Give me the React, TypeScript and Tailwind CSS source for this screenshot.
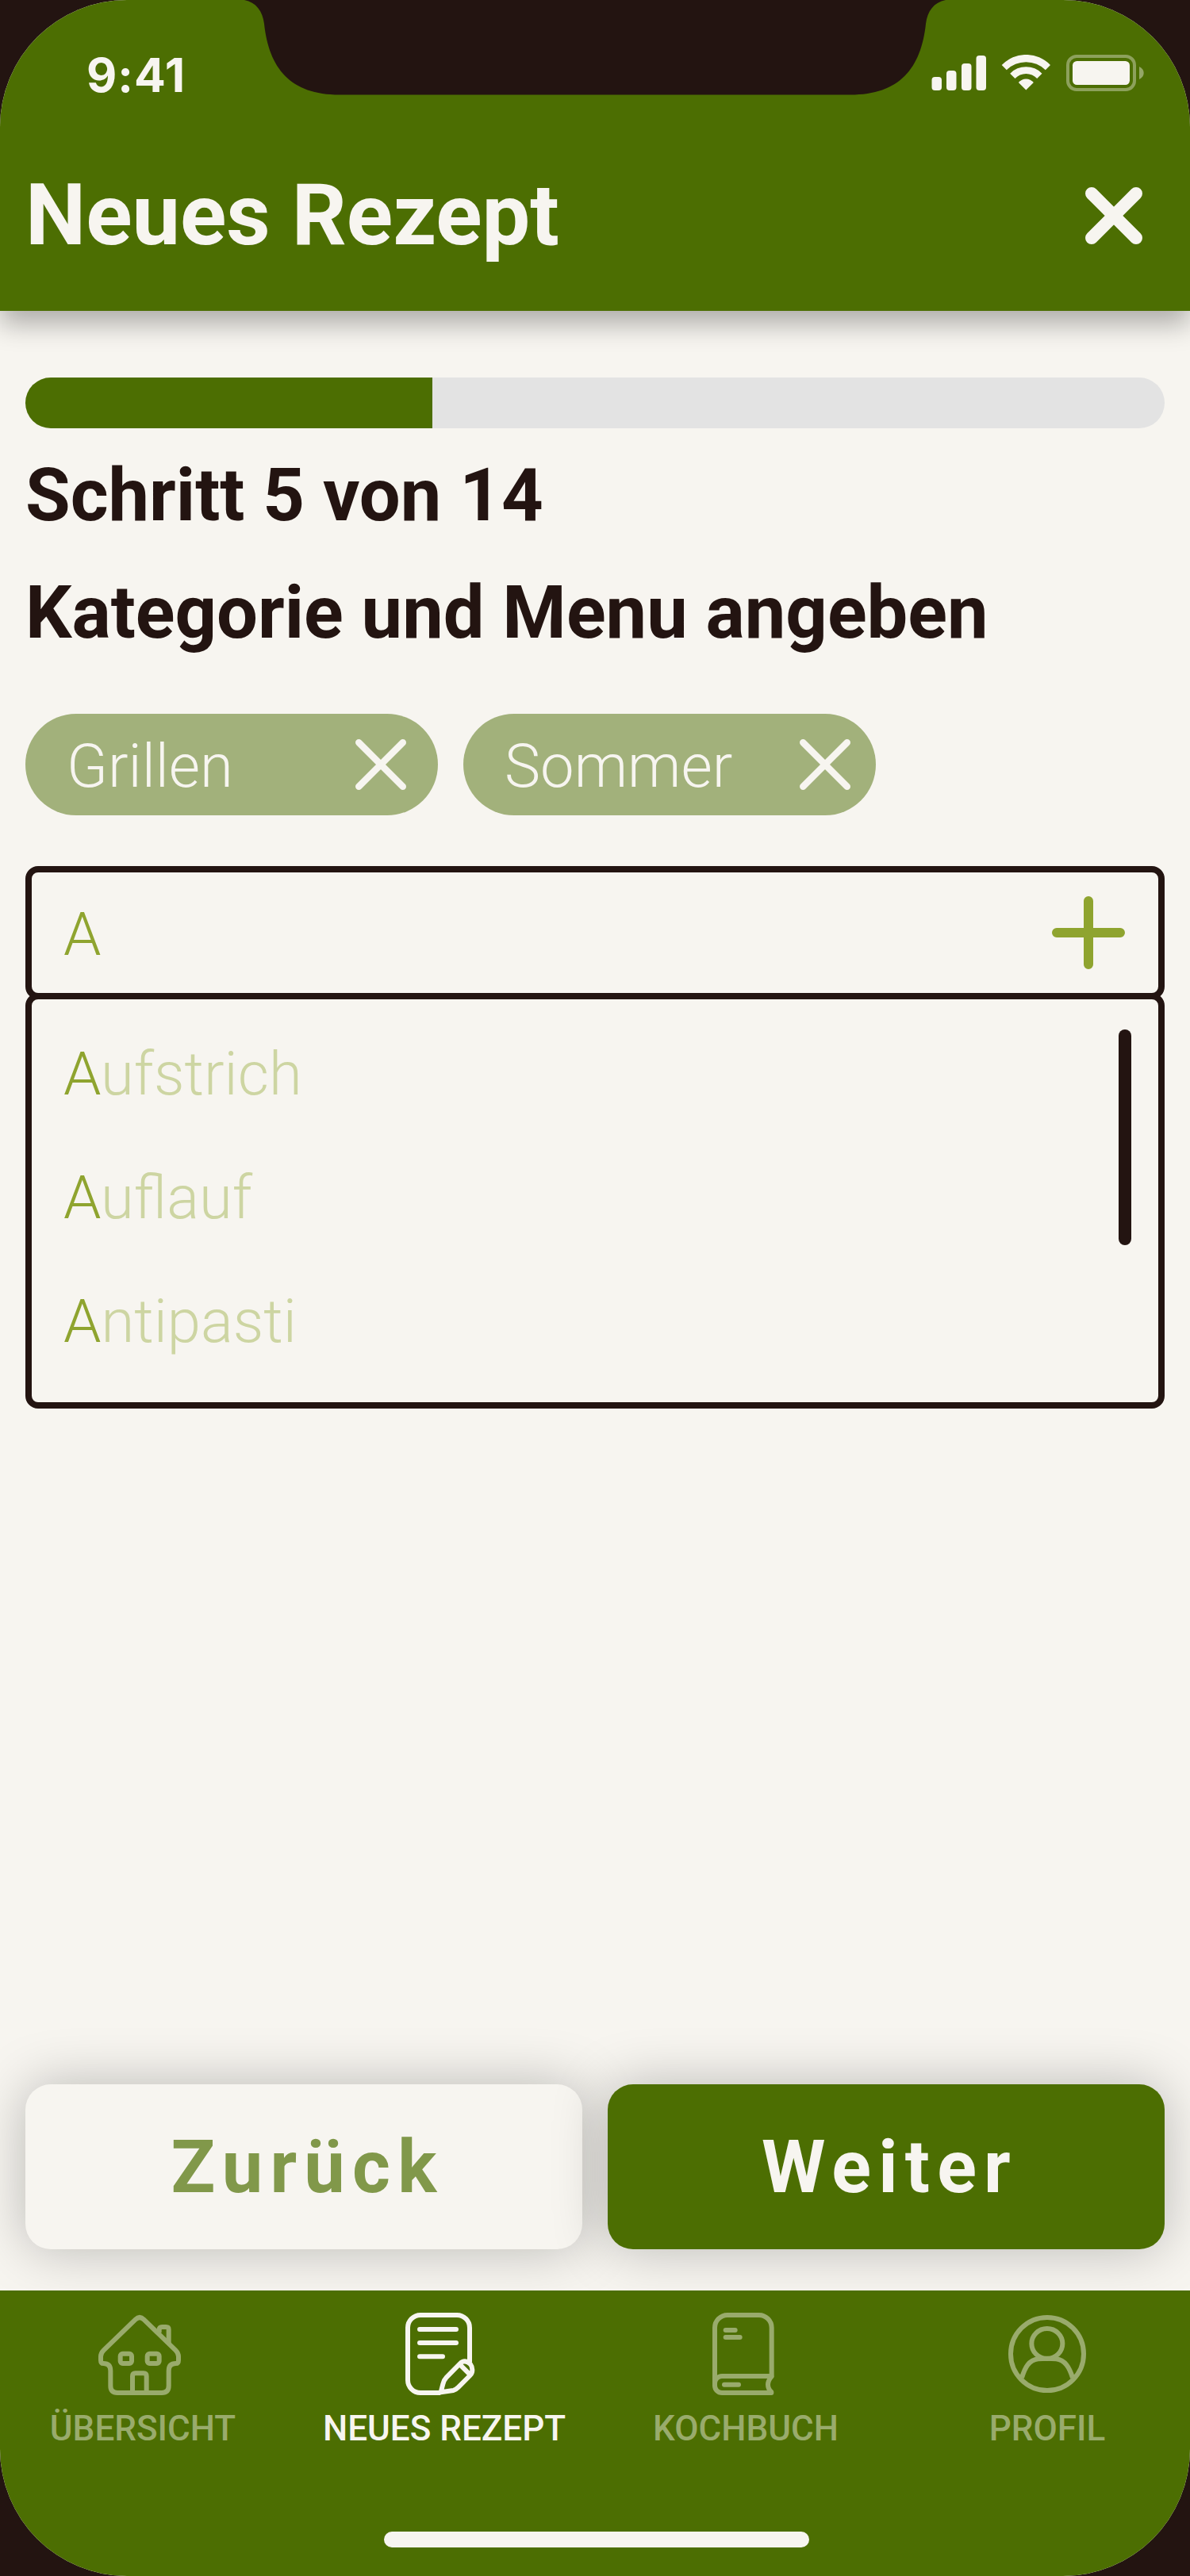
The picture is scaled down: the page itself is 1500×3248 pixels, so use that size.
import React from "react";

function Notch() {
  return (
    <svg className="absolute left-[300px] top-0" width="900" height="120" viewBox="300 0 900 120">
      <path
        d="M308 0C323 3 331 14 333 30C339 86 366 119.5 428 119.5H1072C1134 119.5 1161 86 1167 30C1169 14 1177 3 1192 0Z"
        fill="#231411"
      />
    </svg>
  );
}

function StatusIcons() {
  return (
    <svg width="268" height="46" viewBox="1174 69 268 46" fill="#f7f5f0">
      <rect x="1174.500" y="97" width="12.500" height="17" rx="4" />
      <rect x="1193" y="89" width="12.500" height="25" rx="4" />
      <rect x="1212" y="80" width="12.500" height="34" rx="4" />
      <rect x="1230.500" y="70" width="12.500" height="44" rx="4" />
      <path d="M1262.700 82A42.500 42.500 0 0 1 1324 82L1317.800 88.300A34.500 34.500 0 0 0 1268.900 88.300Z" />
      <path d="M1273.200 92.700A28 28 0 0 1 1313.500 92.700L1307.200 99A19 19 0 0 0 1279.500 99Z" />
      <path d="M1283.800 104A12.600 12.600 0 0 1 1302.900 104L1293.300 113.500Z" />
      <rect x="1346" y="71" width="84" height="42" rx="11" fill="none" stroke="#f7f5f0" strokeWidth="4" opacity=".38" />
      <rect x="1352" y="77" width="72" height="30" rx="5.500" />
      <path d="M1436 84C1439.500 85.500 1441.700 88.500 1441.700 92C1441.700 95.500 1439.500 98.500 1436 100Z" opacity=".42" />
    </svg>
  );
}

function Cross({ size, stroke }: { size: number; stroke: number }) {
  const a = stroke / 2;
  const b = size - a;
  return (
    <svg width={size} height={size} viewBox={`0 0 ${size} ${size}`} stroke="#f7f5f0" strokeWidth={stroke} strokeLinecap="round">
      <path d={`M${a} ${a}L${b} ${b}M${b} ${a}L${a} ${b}`} />
    </svg>
  );
}

function Chip({ label, className }: { label: string; className: string }) {
  return (
    <div className={`flex h-[128px] w-[520px] items-center justify-between rounded-full bg-[#a2b17b] pl-[52px] ${className}`}>
      <span className="mt-[4px] text-[76px] leading-none font-light text-[#f7f5f0]">{label}</span>
      <Cross size={64} stroke={8.500} />
    </div>
  );
}

const icons = {
  house: (
    <>
      <path d="M272 134Q288 118 304 134L424 250Q435 261 435 274V287Q435 300 425 300Q398 300 398 328V385Q398 411 372 411H204Q178 411 178 385V328Q178 300 151 300Q141 300 141 287V274Q141 261 152 250Z" />
      <path d="M362 184V173Q362 162 373 162H388Q398 162 398 172V222" />
      <rect x="215" y="263" width="43" height="37" rx="9" />
      <rect x="317" y="263" width="45" height="37" rx="9" />
      <path d="M261 408V348Q261 337 272 337H303Q314 337 314 348V408" />
    </>
  ),
  note: (
    <>
      <path d="M526 411H450A48 48 0 0 1 402 363V165A48 48 0 0 1 450 117H588A48 48 0 0 1 636 165V296" />
      <path strokeLinecap="round" d="M447 171H585M447 222H585M447 274H534" />
      <path d="M527 409L535 378Q539 362 548 353L600 300Q608 292 617 292Q631 294 639 303Q646 312 646 324Q646 337 638 345L592 391Q584 400 574 402Z" />
      <path d="M599 304L635 340" />
    </>
  ),
  book: (
    <>
      <path d="M363 384V165A48 48 0 0 1 411 117H530A48 48 0 0 1 578 165V348H390A27 27 0 0 0 363 375V384A27 27 0 0 0 390 411H578" />
      <path strokeLinecap="round" d="M577 350Q564 366 564 380Q564 396 577 408V411" />
      <path strokeLinecap="round" d="M404 174H440M404 201H458M399 380H453" />
    </>
  ),
  person: (
    <>
      <circle cx="600" cy="264" r="138" />
      <ellipse cx="599.500" cy="225" rx="58.500" ry="57" />
      <path d="M504 354C516 316 530 287 566 283Q600 280 634 283C668 287 684 316 696 354" />
    </>
  ),
};

const tabs = [
  { label: "ÜBERSICHT", icon: icons.house, viewBox: "144 108 312 312", active: false },
  { label: "NEUES REZEPT", icon: icons.note, viewBox: "384 108 312 312", active: true },
  { label: "KOCHBUCH", icon: icons.book, viewBox: "324 108 312 312", active: false },
  { label: "PROFIL", icon: icons.person, viewBox: "444 108 312 312", active: false },
];

const suggestions = ["ufstrich", "uflauf", "ntipasti"];

export default function App() {
  return (
    <div className="w-[1500px] bg-[#231411] font-['Roboto',sans-serif]">
      <div className="relative flex h-[3248px] flex-col overflow-hidden rounded-[160px] bg-[#f7f5f0]">
        <header className="relative h-[392px] shrink-0 bg-[#4c6e02] shadow-[0_16px_32px_rgba(0,0,0,0.3)]">
          <Notch />
          <div className="flex h-[184px] items-center justify-between pr-[58px] pl-[109px]">
            <span className="mt-[4px] font-['Inter',sans-serif] text-[59px] leading-none font-[650] tracking-[1px] text-[#f7f5f0]">9:41</span>
            <StatusIcons />
          </div>
          <div className="flex h-[176px] items-center justify-between pr-[60px] pl-[32px]">
            <h1 className="-mt-[2px] text-[108px] leading-none font-bold text-[#f7f5f0]">Neues Rezept</h1>
            <Cross size={72} stroke={16} />
          </div>
        </header>

        <main className="flex grow flex-col px-[32px] pt-[84px]">
          <div className="h-[64px] overflow-hidden rounded-full bg-[#e3e3e3]">
            <div className="h-full w-[513px] bg-[#4c6e02]" />
          </div>
          <div className="mt-[11px] text-[92px] leading-[148px] font-bold text-[#231411]">
            <p>Schritt 5 von 14</p>
            <h2>Kategorie und Menu angeben</h2>
          </div>

          <div className="mt-[53px] flex gap-[32px]">
            <Chip label="Grillen" className="pr-[40px]" />
            <Chip label="Sommer" className="pr-[32px]" />
          </div>

          <div className="mt-[64px] flex h-[168px] items-center justify-between rounded-[16px] border-8 border-[#231411] pr-[42px] pl-[40px]">
            <span className="mt-[4px] text-[76px] leading-none font-light text-[#8fa42f]">A</span>
            <svg width="92" height="92" viewBox="0 0 92 92" stroke="#8fa42f" strokeWidth="12" strokeLinecap="round">
              <path d="M6 46H86M46 6V86" />
            </svg>
          </div>
          <div className="-mt-[8px] flex h-[524px] justify-between rounded-[16px] border-8 border-[#231411] pt-[16px] pr-[34px] pl-[40px]">
            <ul className="text-[76px] leading-[156px] font-light">
              {suggestions.map((rest) => (
                <li key={rest} className="text-[#8fa42f]">
                  A<span className="text-[#cdd5a2]">{rest}</span>
                </li>
              ))}
            </ul>
            <div className="mt-[22px] h-[272px] w-[16px] rounded-full bg-[#231411]" />
          </div>

          <div className="mt-auto mb-[52px] flex gap-[32px] text-[92px] font-bold tracking-[9.2px]">
            <button className="h-[208px] flex-1 rounded-[32px] bg-[#f7f5f0] pt-[2px] pl-[9px] text-[#81984a] shadow-[0_0_68px_rgba(0,0,0,0.25)]">Zurück</button>
            <button className="h-[208px] flex-1 rounded-[32px] bg-[#4c6e02] pt-[2px] pl-[9px] text-[#f7f5f0] shadow-[0_0_68px_rgba(0,0,0,0.25)]">Weiter</button>
          </div>
        </main>

        <nav className="relative flex h-[360px] shrink-0 flex-col items-center bg-[#4c6e02] pt-[28px]">
          <div className="grid w-[1520px] grid-cols-4">
            {tabs.map((tab) => (
              <div key={tab.label} className={`flex flex-col items-center ${tab.active ? "text-[#f7f5f0]" : "text-[#99ab6c]"}`}>
                <svg className="overflow-visible" width="104" height="104" viewBox={tab.viewBox} fill="none" stroke="currentColor" strokeWidth="18" strokeLinejoin="round">
                  {tab.icon}
                </svg>
                <span className="mt-[16px] text-[44px] leading-[52px] font-medium">{tab.label}</span>
              </div>
            ))}
          </div>
          <div className="mt-[104px] ml-[4px] h-[20px] w-[536px] shrink-0 rounded-full bg-[#f7f5f0]" />
        </nav>
      </div>
    </div>
  );
}
